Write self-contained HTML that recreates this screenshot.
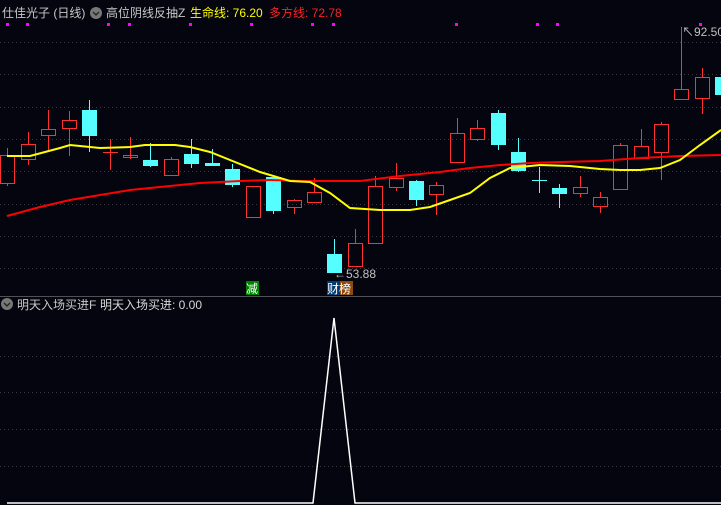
<!DOCTYPE html>
<html><head><meta charset="utf-8"><style>
html,body{margin:0;padding:0;background:#05050f;width:721px;height:505px;overflow:hidden}
svg{display:block}
text{font-family:"Liberation Sans","Noto Sans CJK SC",sans-serif;font-size:12px}
</style></head><body>
<svg width="721" height="505" viewBox="0 0 721 505" xmlns="http://www.w3.org/2000/svg">
<rect width="721" height="505" fill="#05050f"/>
<g stroke="#3a3a40" stroke-dasharray="1 3" stroke-width="1">
<line x1="0" y1="42.5" x2="721" y2="42.5"/><line x1="0" y1="74.5" x2="721" y2="74.5"/>
<line x1="0" y1="107.5" x2="721" y2="107.5"/><line x1="0" y1="139.5" x2="721" y2="139.5"/>
<line x1="0" y1="171.5" x2="721" y2="171.5"/><line x1="0" y1="204.5" x2="721" y2="204.5"/>
<line x1="0" y1="236.5" x2="721" y2="236.5"/><line x1="0" y1="268.5" x2="721" y2="268.5"/>
<line x1="0" y1="356.5" x2="721" y2="356.5"/><line x1="0" y1="392.5" x2="721" y2="392.5"/>
<line x1="0" y1="429.5" x2="721" y2="429.5"/><line x1="0" y1="466.5" x2="721" y2="466.5"/>
</g>
<line x1="0" y1="296.5" x2="721" y2="296.5" stroke="#505055"/>
<g fill="#ff00ff">
<rect x="6" y="23" width="3" height="3"/><rect x="26" y="23" width="3" height="3"/><rect x="107" y="23" width="3" height="3"/><rect x="128" y="23" width="3" height="3"/><rect x="189" y="23" width="3" height="3"/><rect x="250" y="23" width="3" height="3"/><rect x="311" y="23" width="3" height="3"/><rect x="332" y="23" width="3" height="3"/><rect x="455" y="23" width="3" height="3"/><rect x="536" y="23" width="3" height="3"/><rect x="556" y="23" width="3" height="3"/><rect x="699" y="23" width="3" height="3"/>
</g>
<g id="c" stroke-width="1"></g>
<g stroke="#ff3030" fill="none">
<!-- red candles: wick top, body top, body bottom, wick bottom -->
<path d="M7.5 148V155M7.5 183V186M28.5 132V144M28.5 159V165M48.5 110V129M48.5 135V150M69.5 111V120M69.5 128V156M110.5 139V170M130.5 137V159M171.5 157V159M171.5 175V176M253.5 217V217M294.5 199V200M294.5 207V214M314.5 178V192M314.5 202V203M355.5 229V243M396.5 163V178M396.5 187V191M436.5 182V185M436.5 194V215M457.5 118V133M477.5 120V128M477.5 139V141M580.5 176V187M580.5 193V197M600.5 192V197M600.5 206V213M620.5 143V145M641.5 129V146M661.5 122V124M661.5 152V180M681.5 27V89M702.5 68V77M702.5 98V114"/>
<rect x="0.5" y="155.5" width="14" height="28"/><rect x="21.5" y="144.5" width="14" height="15"/><rect x="41.5" y="129.5" width="14" height="6"/><rect x="62.5" y="120.5" width="14" height="8"/>
<line x1="103" y1="152.5" x2="118" y2="152.5"/><rect x="123.5" y="155.5" width="14" height="2"/>
<rect x="164.5" y="159.5" width="14" height="16"/><rect x="246.5" y="186.5" width="14" height="31"/>
<rect x="287.5" y="200.5" width="14" height="7"/><rect x="307.5" y="192.5" width="14" height="10"/>
<rect x="348.5" y="243.5" width="14" height="23"/><rect x="368.5" y="186.5" width="14" height="57"/><path d="M375.5 176V186"/>
<rect x="389.5" y="178.5" width="14" height="9"/><rect x="429.5" y="185.5" width="14" height="9"/>
<rect x="450.5" y="133.5" width="14" height="29"/><rect x="470.5" y="128.5" width="14" height="11"/>
<rect x="573.5" y="187.5" width="14" height="6"/><rect x="593.5" y="197.5" width="14" height="9"/>
<rect x="613.5" y="145.5" width="14" height="44"/><rect x="634.5" y="146.5" width="14" height="12"/>
<rect x="654.5" y="124.5" width="14" height="28"/><rect x="674.5" y="89.5" width="14" height="10"/><rect x="695.5" y="77.5" width="14" height="21"/>
</g>
<g stroke="#55ffff" fill="#55ffff">
<path d="M89.5 100V152M150.5 143V167M191.5 139V168M212.5 149V166M232.5 164V187M273.5 176V214M334.5 239V272M416.5 180V206M498.5 110V150M518.5 138V172M539.5 167V193M559.5 184V208" fill="none"/>
<rect x="82.5" y="110.5" width="14" height="25"/><rect x="143.5" y="160.5" width="14" height="5"/><rect x="184.5" y="154.5" width="14" height="9"/><rect x="205.5" y="163.5" width="14" height="2"/><rect x="225.5" y="169.5" width="14" height="15"/><rect x="266.5" y="177.5" width="14" height="33"/><rect x="327.5" y="254.5" width="14" height="18"/><rect x="409.5" y="181.5" width="14" height="18"/><rect x="491.5" y="113.5" width="14" height="31"/><rect x="511.5" y="152.5" width="14" height="18"/><line x1="532" y1="180.5" x2="547" y2="180.5"/><rect x="552.5" y="188.5" width="14" height="5"/><rect x="715.5" y="77.5" width="14" height="17"/>
</g>
<polyline fill="none" stroke="#ff0000" stroke-width="2" points="7,216 40,207 70,200 100,195 130,190 160,187 200,183 240,181 270,180 300,181 330,181 360,181 400,176 440,172 470,168 500,165 530,163 560,162 600,161 640,158 680,156 721,155"/>
<polyline fill="none" stroke="#ffff00" stroke-width="2" points="7,156 30,156 45,152 60,148 70,145 80,146 100,148 130,147 145,145 175,145 190,147 210,152 235,162 260,172 290,181 310,182 330,193 350,208 380,210 410,210 430,207 450,200 470,193 490,178 510,168 540,165 570,166 600,169 620,170 640,170 660,168 680,160 700,145 721,130"/>
<polyline fill="none" stroke="#ffffff" stroke-width="1.5" points="7,503 313,503 334,318 355,503 721,503"/>
<text x="2" y="17" fill="#c8c8c8">仕佳光子 (日线)</text>
<circle cx="96" cy="13" r="6" fill="#777"/><path d="M93 12l3 3 3-3" stroke="#222" fill="none" stroke-width="1.3"/>
<text x="106" y="17" fill="#c8c8c8">高位阴线反抽Z</text>
<text x="190" y="17" fill="#ffff00">生命线: 76.20</text>
<text x="269" y="17" fill="#ff2020">多方线: 72.78</text>
<text x="682" y="36" fill="#c0c0c0">↖92.50</text>
<text x="334" y="278" fill="#c0c0c0">←53.88</text>
<rect x="246" y="281" width="13" height="14" fill="#008000"/><text x="246" y="293" fill="#fff">减</text>
<rect x="327" y="281" width="13" height="14" fill="#003a70"/><rect x="340" y="281" width="13" height="14" fill="#8b4a10"/>
<text x="327" y="293" fill="#fff">财榜</text>
<circle cx="7" cy="304" r="6" fill="#777"/><path d="M4 303l3 3 3-3" stroke="#222" fill="none" stroke-width="1.3"/>
<text x="17" y="309" fill="#c8c8c8">明天入场买进F</text>
<text x="100" y="309" fill="#d8d8d8">明天入场买进: 0.00</text>
</svg>
</body></html>
